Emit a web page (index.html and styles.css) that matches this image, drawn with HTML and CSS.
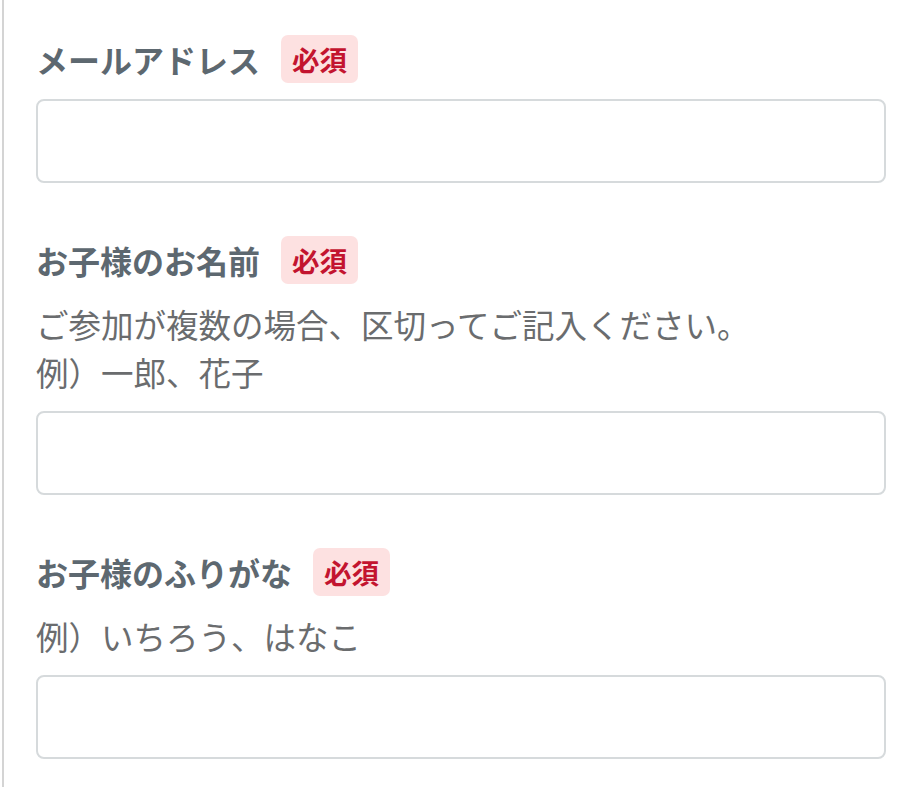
FILE: index.html
```html
<!DOCTYPE html>
<html lang="ja">
<head>
  <meta charset="UTF-8">
  <meta name="viewport" content="width=device-width, initial-scale=1.0">
  <title>お申し込みフォーム</title>
  <link rel="stylesheet" href="styles.css">
</head>
<body>
  <form class="entry-form">
    <div class="field">
      <div class="field-label">
        <label for="email">メールアドレス</label>
        <span class="required">必須</span>
      </div>
      <input class="text-input" type="email" id="email" name="email">
    </div>

    <div class="field">
      <div class="field-label">
        <label for="child-name">お子様のお名前</label>
        <span class="required">必須</span>
      </div>
      <p class="field-help">ご参加が複数の場合、区切ってご記入ください。<br>例）一郎、花子</p>
      <input class="text-input" type="text" id="child-name" name="child_name">
    </div>

    <div class="field">
      <div class="field-label">
        <label for="child-kana">お子様のふりがな</label>
        <span class="required">必須</span>
      </div>
      <p class="field-help">例）いちろう、はなこ</p>
      <input class="text-input" type="text" id="child-kana" name="child_kana">
    </div>
  </form>
</body>
</html>
```

FILE: styles.css
```css
body {
    margin: 0;
    background-color: #ffffff;
    font-family: 'Noto Sans CJK JP', 'Noto Sans', sans-serif;
}
.entry-form {
    margin-left: 2px;
    border-left: 2px solid #d4d4d4;
    padding: 35px 34px 0 32px;
    min-height: 787px;
    box-sizing: border-box;
}
.field {
    margin-bottom: 53px;
}
.field-label {
    display: flex;
    align-items: center;
    gap: 21px;
    height: 48px;
    margin-bottom: 16px;
}
.field-label label {
    font-size: 32px;
    font-weight: 700;
    color: #5d6870;
}
.required {
    display: inline-flex;
    align-items: center;
    height: 48px;
    padding: 0 11px;
    border-radius: 7px;
    background-color: #fde1e1;
    color: #c3142f;
    font-size: 27.5px;
    font-weight: 700;
}
.field-help {
    margin: 0 0 15px;
    font-size: 32.5px;
    line-height: 48px;
    color: #6a6c6e;
}
.text-input {
    display: block;
    width: 100%;
    height: 84px;
    box-sizing: border-box;
    border: 2px solid #d6dadc;
    border-radius: 8px;
    background: #ffffff;
    font-size: 28px;
    padding: 0 16px;
}
```
